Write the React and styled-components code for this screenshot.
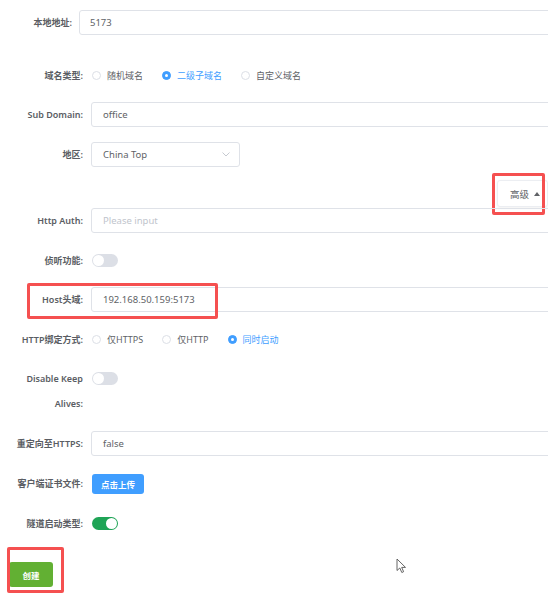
import React from 'react';
import styled, { createGlobalStyle } from 'styled-components';

const GlobalStyle = createGlobalStyle`
  html, body {
    margin: 0;
    padding: 0;
    background: #ffffff;
    overflow: hidden;
  }
  body {
    font-family: 'Noto Sans', 'Noto Sans CJK SC', sans-serif;
  }
`;

const Page = styled.div`
  position: relative;
  width: 548px;
  height: 594px;
  padding-top: 10px;
  box-sizing: border-box;
`;

const FormItem = styled.div`
  position: relative;
  display: flex;
  align-items: flex-start;
  margin-top: ${(p) => p.$gap || 0}px;
`;

const Label = styled.label`
  flex-shrink: 0;
  width: ${(p) => p.$w || 91}px;
  padding-right: ${(p) => p.$pr || 8}px;
  box-sizing: border-box;
  text-align: right;
  line-height: 25px;
  font-size: 9px;
  font-weight: 600;
  color: #5a5d63;
  white-space: nowrap;
`;

const Content = styled.div`
  display: flex;
  align-items: center;
  min-height: 25px;
`;

const Input = styled.div`
  width: ${(p) => p.$w || 480}px;
  height: 25px;
  box-sizing: border-box;
  border: 1px solid #dfe2e8;
  border-radius: 3px;
  padding: 0 ${(p) => p.$pad || 10}px;
  display: flex;
  align-items: center;
  font-size: 9.5px;
  color: ${(p) => (p.$placeholder ? '#c0c4cc' : '#606266')};
`;

const Select = styled(Input)`
  justify-content: space-between;
  padding-right: 9px;
`;

const Chevron = () => (
  <svg width="8" height="5" viewBox="0 0 8 5">
    <path d="M0.5 0.5 L4 4 L7.5 0.5" fill="none" stroke="#c0c4cc" strokeWidth="0.9" />
  </svg>
);

const RadioGroup = styled.div`
  display: flex;
  align-items: center;
  height: 25px;
`;

const RadioItem = styled.span`
  display: flex;
  align-items: center;
  margin-right: ${(p) => p.$mr || 18}px;
  font-size: 9px;
  color: ${(p) => (p.$checked ? '#409eff' : '#606266')};
`;

const RadioDot = styled.span`
  width: 9px;
  height: 9px;
  box-sizing: border-box;
  border-radius: 50%;
  margin: 0 6px 0 1px;
  border: 1px solid ${(p) => (p.$checked ? '#409eff' : '#dcdfe6')};
  background: ${(p) => (p.$checked ? '#409eff' : '#fff')};
  display: flex;
  align-items: center;
  justify-content: center;

  &::after {
    content: '';
    width: 3px;
    height: 3px;
    border-radius: 50%;
    background: #fff;
    display: ${(p) => (p.$checked ? 'block' : 'none')};
  }
`;

const Toggle = styled.span`
  position: relative;
  display: inline-block;
  width: 26px;
  height: 13px;
  margin-left: 1px;
  border-radius: 7px;
  background: ${(p) => (p.$on ? '#1fa456' : '#dcdfe6')};

  &::after {
    content: '';
    position: absolute;
    top: 1px;
    left: ${(p) => (p.$on ? '14px' : '1px')};
    width: 11px;
    height: 11px;
    border-radius: 50%;
    background: #fff;
  }
`;

const Button = styled.span`
  display: inline-flex;
  align-items: center;
  justify-content: center;
  width: ${(p) => p.$w}px;
  height: ${(p) => p.$h}px;
  border-radius: 3px;
  background: ${(p) => p.$bg};
  color: #fff;
  font-size: 8.5px;
  font-weight: 700;
  margin-left: ${(p) => p.$ml || 0}px;
`;

const AdvancedBar = styled.div`
  position: relative;
  display: flex;
  margin-top: 13px;
  padding-left: 497px;
  height: 28px;
`;

const AdvancedButton = styled.span`
  display: flex;
  align-items: center;
  width: 60px;
  height: 27px;
  box-sizing: border-box;
  padding-left: 12px;
  background: #fff;
  border: 1px solid #eceef2;
  border-radius: 3px;
  box-shadow: 0 1px 3px rgba(0, 0, 0, 0.06);
  font-size: 9.5px;
  color: #606266;
  gap: 5px;
`;

const Caret = styled.span`
  width: 0;
  height: 0;
  border-left: 3px solid transparent;
  border-right: 3px solid transparent;
  border-bottom: 4px solid #606266;
`;

const Highlight = styled.div`
  position: absolute;
  left: ${(p) => p.$x}px;
  top: ${(p) => p.$y}px;
  width: ${(p) => p.$w}px;
  height: ${(p) => p.$h}px;
  box-sizing: border-box;
  border: 3px solid #f55050;
  border-radius: 2px;
  pointer-events: none;
`;

const Cursor = styled.svg`
  position: absolute;
  left: 396px;
  top: 558px;
`;

const Radios = ({ items, checked }) => (
  <RadioGroup>
    {items.map((t, i) => (
      <RadioItem key={t} $checked={i === checked}>
        <RadioDot $checked={i === checked} />
        {t}
      </RadioItem>
    ))}
  </RadioGroup>
);

const App = () => {
  return (
    <>
      <GlobalStyle />
      <Page>
        <FormItem>
          <Label $w={79} $pr={7}>本地地址:</Label>
          <Content>
            <Input>5173</Input>
          </Content>
        </FormItem>

        <FormItem $gap={28}>
          <Label>域名类型:</Label>
          <Radios items={['随机域名', '二级子域名', '自定义域名']} checked={1} />
        </FormItem>

        <FormItem $gap={14}>
          <Label>Sub Domain:</Label>
          <Content>
            <Input $pad={11}>office</Input>
          </Content>
        </FormItem>

        <FormItem $gap={15}>
          <Label>地区:</Label>
          <Content>
            <Select $w={149} $pad={11}>
              China Top
              <Chevron />
            </Select>
          </Content>
        </FormItem>

        <AdvancedBar>
          <AdvancedButton>
            高级
            <Caret />
          </AdvancedButton>
          <Highlight $x={492} $y={-7} $w={53} $h={42} />
        </AdvancedBar>

        <FormItem>
          <Label>Http Auth:</Label>
          <Content>
            <Input $pad={11} $placeholder>Please input</Input>
          </Content>
        </FormItem>

        <FormItem $gap={15}>
          <Label>侦听功能:</Label>
          <Content>
            <Toggle />
          </Content>
        </FormItem>

        <FormItem $gap={14}>
          <Label>Host头域:</Label>
          <Content>
            <Input $pad={11}>192.168.50.159:5173</Input>
          </Content>
          <Highlight $x={27} $y={-4} $w={191} $h={36} />
        </FormItem>

        <FormItem $gap={15}>
          <Label>HTTP绑定方式:</Label>
          <Radios items={['仅HTTPS', '仅HTTP', '同时启动']} checked={2} />
        </FormItem>

        <FormItem $gap={14}>
          <Label>
            Disable Keep
            <br />
            Alives:
          </Label>
          <Content>
            <Toggle />
          </Content>
        </FormItem>

        <FormItem $gap={15}>
          <Label>重定向至HTTPS:</Label>
          <Content>
            <Input $pad={11}>false</Input>
          </Content>
        </FormItem>

        <FormItem $gap={15}>
          <Label>客户端证书文件:</Label>
          <Content>
            <Button $w={52} $h={20} $bg="#409eff" $ml={1}>点击上传</Button>
          </Content>
        </FormItem>

        <FormItem $gap={15}>
          <Label>隧道启动类型:</Label>
          <Content>
            <Toggle $on />
          </Content>
        </FormItem>

        <FormItem $gap={26}>
          <Button $w={44} $h={25} $bg="#62b033" $ml={9}>创建</Button>
          <Highlight $x={7} $y={-15} $w={57} $h={46} />
        </FormItem>

        <Cursor width="12" height="16" viewBox="0 0 12 16">
          <path
            d="M1 1 L1 12.5 L3.8 10 L5.8 14.5 L7.6 13.7 L5.7 9.4 L9.5 9.4 Z"
            fill="#fff"
            stroke="#555"
            strokeWidth="0.9"
            strokeLinejoin="round"
          />
        </Cursor>
      </Page>
    </>
  );
};

export default App;
